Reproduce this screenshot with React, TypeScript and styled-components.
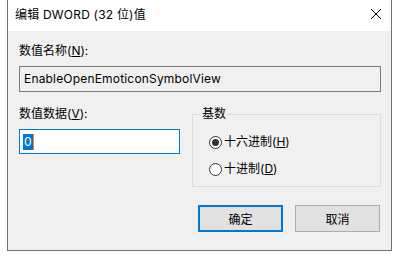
import React from 'react';
import styled, { createGlobalStyle } from 'styled-components';

const GlobalStyle = createGlobalStyle`
  html, body {
    margin: 0;
    padding: 0;
    background: #ffffff;
  }
  body {
    font-family: Inter, "Noto Sans CJK SC", sans-serif;
    font-size: 12px;
    color: #000000;
  }
`;

const Window = styled.div`
  margin-left: 7px;
  width: 385px;
  height: 251px;
  box-sizing: border-box;
  border: 1px solid #717171;
  border-top: none;
  display: flex;
  flex-direction: column;
`;

const TitleBar = styled.div`
  height: 31px;
  flex: none;
  background: #ffffff;
  display: flex;
  align-items: center;
  justify-content: space-between;
  padding: 0 9px 0 7px;
`;

const Title = styled.span`
  font-size: 12px;
  line-height: 16px;
  margin-top: -2px;
  letter-spacing: 0.2px;
`;

const CloseButton = styled.button`
  border: none;
  background: none;
  padding: 0;
  width: 12px;
  height: 12px;
  display: flex;
  margin-top: -4px;
`;

const Body = styled.div`
  flex: 1;
  background: #f0f0f0;
  display: flex;
  flex-direction: column;
  padding: 12px 10px 0 11px;
`;

const Label = styled.div`
  line-height: 16px;
  height: 16px;
`;

const Field = styled.div<{ $focused?: boolean }>`
  box-sizing: border-box;
  height: ${p => (p.$focused ? 25 : 26)}px;
  margin-top: 7px;
  border: 1px solid ${p => (p.$focused ? '#0078d7' : '#7a7a7a')};
  background: ${p => (p.$focused ? '#ffffff' : '#f0f0f0')};
  display: flex;
  align-items: center;
  padding-left: ${p => (p.$focused ? 3 : 4)}px;
  line-height: 16px;
  letter-spacing: 0.18px;
  white-space: nowrap;
  overflow: hidden;
`;

const Selected = styled.span`
  background: #0078d7;
  color: #ffffff;
  padding: 0 1px;
  line-height: 16px;
`;

const Caret = styled.span`
  width: 1px;
  height: 16px;
  background: #e08a2e;
`;

const Row = styled.div`
  display: flex;
  gap: 12px;
  margin-top: 14px;
`;

const LeftColumn = styled.div`
  width: 161px;
  display: flex;
  flex-direction: column;
`;

const Group = styled.fieldset`
  margin: 0;
  flex: 1;
  border: 1px solid #dcdcdc;
  padding: 12px 0 4px 8px;
  height: 81px;
  box-sizing: border-box;
  display: flex;
  flex-direction: column;
  gap: 11px;
`;

const Legend = styled.legend`
  padding: 0 1px;
  margin-left: 0;
  line-height: 16px;
`;

const RadioRow = styled.label`
  display: flex;
  align-items: center;
  gap: 2px;
  margin-left: 8px;
  line-height: 16px;
`;

const RadioCircle = styled.span<{ $checked?: boolean }>`
  width: 13px;
  height: 13px;
  box-sizing: border-box;
  border: 1px solid #333333;
  border-radius: 50%;
  background: #ffffff;
  display: flex;
  align-items: center;
  justify-content: center;

  &::after {
    content: '';
    width: 7px;
    height: 7px;
    border-radius: 50%;
    background: ${p => (p.$checked ? '#333333' : 'transparent')};
  }
`;

const ButtonRow = styled.div`
  display: flex;
  justify-content: flex-end;
  gap: 12px;
  margin-top: 18px;
  padding-right: 1px;
`;

const Button = styled.button<{ $default?: boolean }>`
  width: 85px;
  height: 27px;
  box-sizing: border-box;
  background: #e1e1e1;
  border: ${p => (p.$default ? '2px solid #0078d7' : '1px solid #adadad')};
  font-family: inherit;
  font-size: 12px;
  color: #000000;
  padding: 0;
`;

const App: React.FC = () => {
  return (
    <>
      <GlobalStyle />
      <Window>
        <TitleBar>
          <Title>编辑 DWORD (32 位)值</Title>
          <CloseButton aria-label="关闭">
            <svg width="12" height="12" viewBox="0 0 12 12">
              <path d="M1 1 L11 11 M11 1 L1 11" stroke="#000" strokeWidth="1" fill="none" />
            </svg>
          </CloseButton>
        </TitleBar>
        <Body>
          <Label>数值名称(<u>N</u>):</Label>
          <Field>EnableOpenEmoticonSymbolView</Field>
          <Row>
            <LeftColumn>
              <Label>数值数据(<u>V</u>):</Label>
              <Field $focused>
                <Selected>0</Selected>
                <Caret />
              </Field>
            </LeftColumn>
            <Group>
              <Legend>基数</Legend>
              <RadioRow>
                <RadioCircle $checked />
                <span>十六进制(<u>H</u>)</span>
              </RadioRow>
              <RadioRow>
                <RadioCircle />
                <span>十进制(<u>D</u>)</span>
              </RadioRow>
            </Group>
          </Row>
          <ButtonRow>
            <Button $default>确定</Button>
            <Button>取消</Button>
          </ButtonRow>
        </Body>
      </Window>
    </>
  );
};

export default App;
